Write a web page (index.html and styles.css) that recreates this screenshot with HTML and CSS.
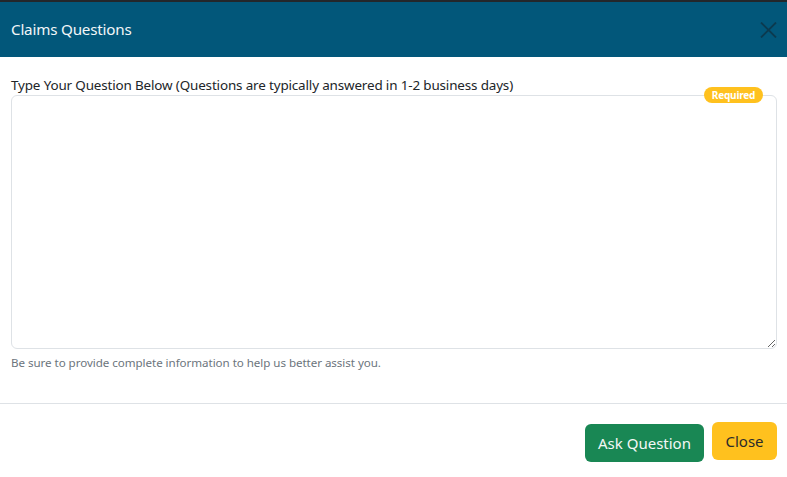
FILE: index.html
```html
<!DOCTYPE html>
<html>
<head>
<meta charset="utf-8">
<link rel="stylesheet" href="styles.css">
</head>
<body>
<div class="topstrip"></div>
<div class="modal">
  <div class="modal-header">
    <h5 class="modal-title">Claims Questions</h5>
    <button class="btn-x" aria-label="Close">
      <svg width="17" height="16" viewBox="0 0 17 16"><path d="M1 0.5 L16 15.5 M16 0.5 L1 15.5" stroke="#0c3a4f" stroke-width="1.8" fill="none"/></svg>
    </button>
  </div>
  <div class="modal-body">
    <label class="form-label">Type Your Question Below (Questions are typically answered in 1-2 business days)</label>
    <div class="field">
      <textarea class="form-control"></textarea>
      <span class="badge">Required</span>
    </div>
    <div class="form-text">Be sure to provide complete information to help us better assist you.</div>
  </div>
  <div class="modal-footer">
    <button class="btn btn-green">Ask Question</button>
    <button class="btn btn-yellow">Close</button>
  </div>
</div>
</body>
</html>
```

FILE: styles.css
```css
html, body {
  margin: 0;
  padding: 0;
  background: #ffffff;
  font-family: "Noto Sans", "Open Sans", sans-serif;
  color: #212529;
}
.topstrip {
  height: 2px;
  background: #23272b;
}
.modal {
  display: flex;
  flex-direction: column;
}
.modal-header {
  height: 55px;
  background: #02577a;
  display: flex;
  align-items: center;
  justify-content: space-between;
  padding: 0 10px 0 11px;
}
.modal-title {
  margin: 0 0 2px 0;
  font-size: 15.2px;
  font-weight: 400;
  color: #f2f6f8;
  letter-spacing: -0.2px;
}
.btn-x {
  border: 0;
  background: transparent;
  padding: 0;
  width: 17px;
  height: 16px;
  display: block;
}
.btn-x svg { display: block; }
.modal-body {
  padding: 20px 10px 0 11px;
  display: flex;
  flex-direction: column;
}
.form-label {
  font-size: 13.45px;
  line-height: 17px;
  letter-spacing: -0.15px;
  color: #212529;
}
.field {
  position: relative;
  margin-top: 1px;
}
.form-control {
  display: block;
  box-sizing: border-box;
  width: 100%;
  height: 254px;
  border: 1px solid #dee2e6;
  border-radius: 6px;
  resize: vertical;
  margin: 0;
  font-family: inherit;
}
.badge {
  position: absolute;
  top: -8px;
  right: 14px;
  width: 59px;
  height: 16px;
  border-radius: 8px;
  background: #ffc11e;
  color: #ffffff;
  font-size: 10px;
  font-weight: 700;
  line-height: 16px;
  text-align: center;
  letter-spacing: -0.2px;
}
.form-text {
  margin-top: 6px;
  font-size: 11.6px;
  line-height: 15px;
  color: #6c757d;
  letter-spacing: -0.05px;
}
.modal-footer {
  margin-top: 33px;
  border-top: 1px solid #dee2e6;
  display: flex;
  justify-content: flex-end;
  align-items: flex-start;
  gap: 8px;
  padding: 18px 10px 0 0;
}
.btn {
  font-family: inherit;
  border: 0;
  border-radius: 6px;
  font-size: 15px;
  padding: 0;
  cursor: pointer;
}
.btn-green {
  margin-top: 2px;
  width: 119px;
  height: 38px;
  background: #198754;
  color: #f4f8f6;
}
.btn-yellow {
  width: 65px;
  height: 38px;
  background: #ffc11e;
  color: #2b2b2b;
}
```
